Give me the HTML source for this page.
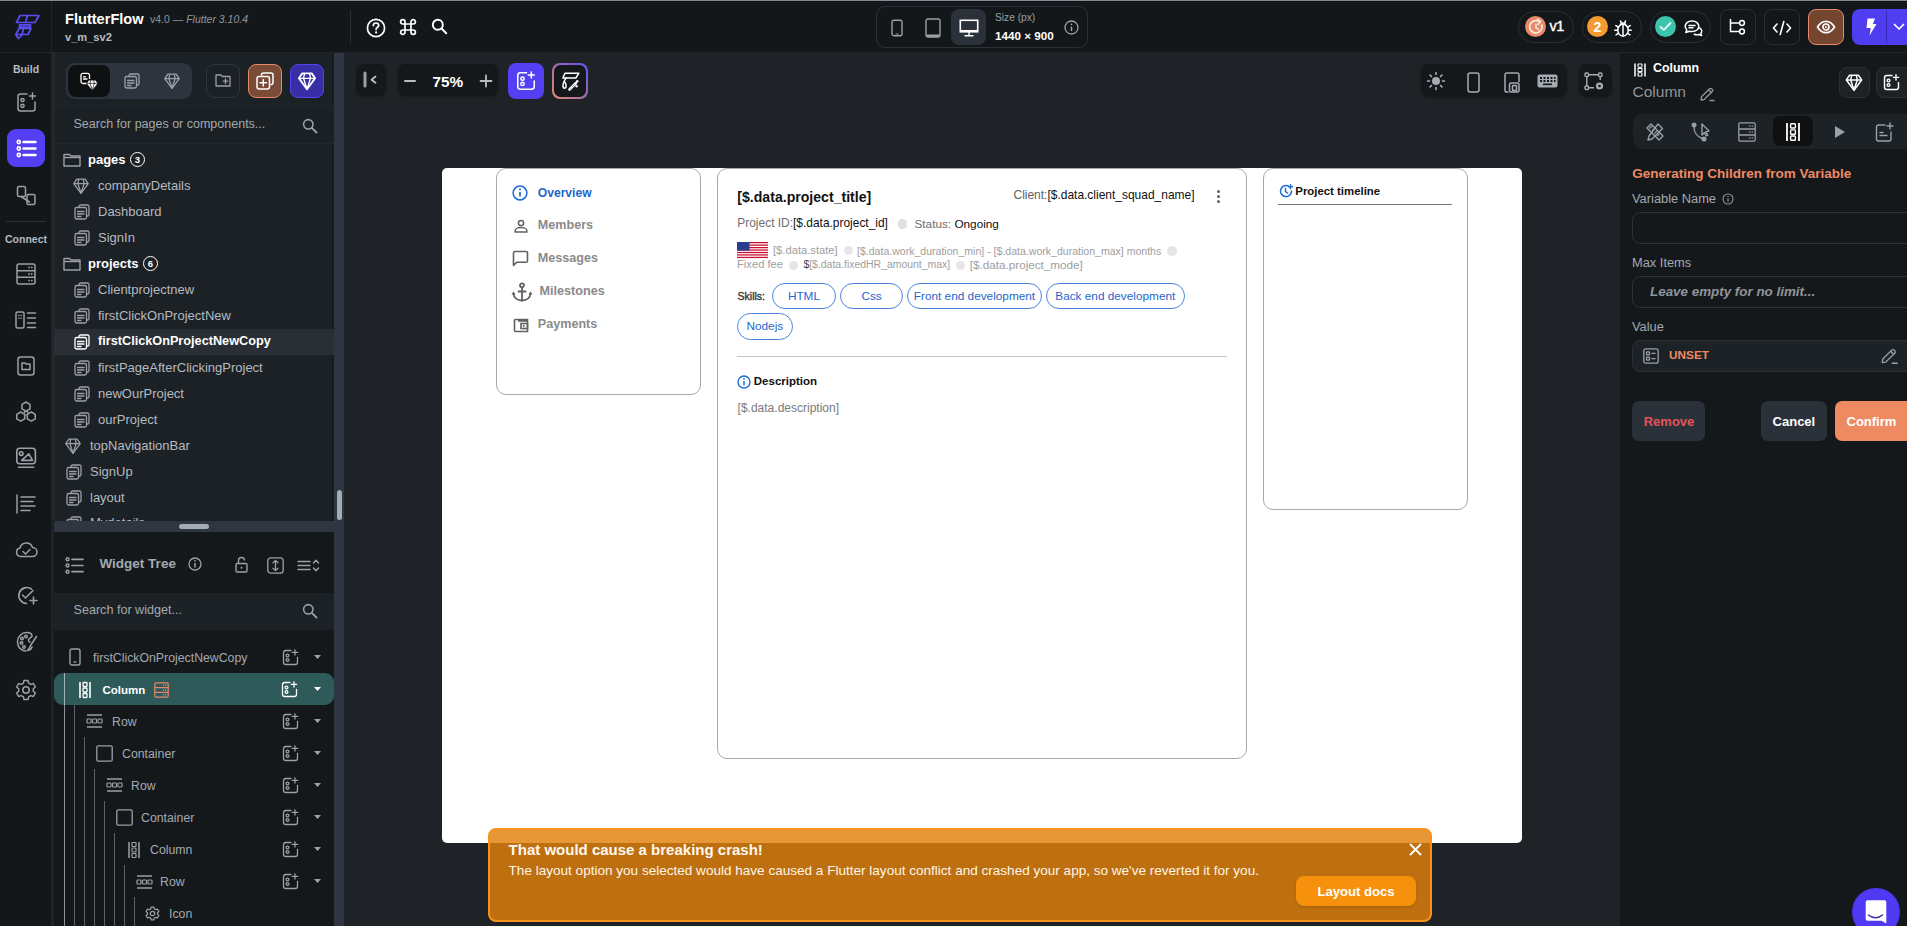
<!DOCTYPE html>
<html><head><meta charset="utf-8"><style>
*{margin:0;padding:0;box-sizing:border-box}
html,body{width:1907px;height:926px;overflow:hidden}
body{background:#1f2327;font-family:"Liberation Sans",sans-serif;position:relative;color:#fff}
.a{position:absolute}
.t{position:absolute;white-space:nowrap;line-height:1}
svg{position:absolute;overflow:visible}
.ic{fill:none;stroke:#9aa0a6;stroke-width:1.5;stroke-linecap:round;stroke-linejoin:round}
.w{stroke:#fff}
</style></head><body>

<!-- ============ PANEL BACKGROUNDS ============ -->
<div class="a" style="left:0;top:52px;width:52px;height:874px;background:#14171a"></div>
<div class="a" style="left:51px;top:52px;width:1px;height:874px;background:#202428"></div>
<div class="a" style="left:52px;top:52px;width:282px;height:874px;background:#1c2125"></div>
<div class="a" style="left:334px;top:52px;width:10px;height:874px;background:#2f3641"></div>
<div class="a" style="left:332px;top:52px;width:2px;height:874px;background:#181b1e"></div>
<div class="a" style="left:1620px;top:52px;width:287px;height:874px;background:#15181b"></div>

<!-- ============ TOP BAR ============ -->
<div class="a" style="left:0;top:0;width:1907px;height:52px;background:#14171a"></div>
<div class="a" style="left:0;top:0;width:1907px;height:1px;background:#858c93"></div>
<div class="a" style="left:0;top:1px;width:1907px;height:1px;background:#0c1117"></div>
<div class="a" style="left:0;top:2px;width:1907px;height:1px;background:#161b21"></div>
<div class="a" style="left:51px;top:1px;width:1px;height:51px;background:#202428"></div>
<div class="a" style="left:0;top:52px;width:1907px;height:1px;background:#202428"></div>

<!-- logo -->
<svg style="left:15px;top:13px" width="25" height="27" viewBox="0 0 25 27">
 <g fill="none" stroke="#5a4ef2" stroke-width="1.7" stroke-linejoin="round">
  <path d="M5 2.5 H24 L20 9.5 H1.5 Z"/>
  <path d="M12.5 2.5 L10.5 9.5"/>
  <path d="M4.5 11.8 H15.5 V14.2 H4.5 Z"/>
  <path d="M4 15.5 H16 L13 21.5 H0.8 Z"/>
  <path d="M8.5 15.5 L7 21.5"/>
  <path d="M0.8 21.5 L3.5 25.5 L7.5 21.5"/>
 </g>
</svg>
<div class="t" style="left:65px;top:12px;font-size:14.6px;font-weight:bold;color:#fff">FlutterFlow</div>
<div class="t" style="left:150px;top:14px;font-size:10.5px;color:#8f959b">v4.0 — <i>Flutter 3.10.4</i></div>
<div class="t" style="left:65px;top:32px;font-size:11.1px;font-weight:bold;color:#b7bcc1">v_m_sv2</div>

<div class="a" style="left:350px;top:10px;width:1px;height:34px;background:#2a2e33"></div>

<!-- help / cmd / search -->
<svg style="left:366px;top:18px" width="20" height="20" viewBox="0 0 20 20">
 <circle cx="10" cy="10" r="8.6" fill="none" stroke="#fff" stroke-width="1.7"/>
 <path d="M7.3 7.6 C7.3 5.9 8.6 5 10 5 C11.5 5 12.7 6 12.7 7.4 C12.7 9.2 10.1 9.4 10.1 11.4" fill="none" stroke="#fff" stroke-width="1.7" stroke-linecap="round"/>
 <circle cx="10.1" cy="14.4" r="1.1" fill="#fff"/>
</svg>
<svg style="left:400px;top:19px" width="16" height="16" viewBox="0 0 16 16">
 <path d="M5 5 H11 V11 H5 Z M5 5 V2.8 A2.2 2.2 0 1 0 2.8 5 H5 M11 5 V2.8 A2.2 2.2 0 1 1 13.2 5 H11 M5 11 V13.2 A2.2 2.2 0 1 1 2.8 11 H5 M11 11 V13.2 A2.2 2.2 0 1 0 13.2 11 H11" fill="none" stroke="#fff" stroke-width="1.7"/>
</svg>
<svg style="left:431px;top:18px" width="17" height="17" viewBox="0 0 17 17">
 <circle cx="6.8" cy="6.8" r="5" fill="none" stroke="#fff" stroke-width="1.9"/>
 <path d="M10.5 10.5 L15.2 15.2" stroke="#fff" stroke-width="2" stroke-linecap="round"/>
</svg>

<!-- device selector -->
<div class="a" style="left:876px;top:6px;width:212px;height:42px;border:1px solid #2b3035;border-radius:9px"></div>
<svg style="left:891px;top:19px" width="12" height="18" viewBox="0 0 12 18">
 <rect x="1" y="1.2" width="10" height="15.6" rx="2" fill="none" stroke="#9aa0a6" stroke-width="1.4"/>
 <path d="M4.5 15 H7.5" stroke="#9aa0a6" stroke-width="1"/>
</svg>
<svg style="left:925px;top:18px" width="16" height="20" viewBox="0 0 16 20">
 <rect x="1" y="1" width="14" height="18" rx="2" fill="none" stroke="#9aa0a6" stroke-width="1.4"/>
 <path d="M1.5 16.5 H14.5 V17 A2 2 0 0 1 12.5 19 H3.5 A2 2 0 0 1 1.5 17 Z" fill="#9aa0a6"/>
</svg>
<div class="a" style="left:951px;top:9px;width:35px;height:36px;background:#2b3138;border-radius:8px"></div>
<svg style="left:959px;top:19px" width="20" height="18" viewBox="0 0 20 18">
 <rect x="1.3" y="1.3" width="17.4" height="11.5" fill="none" stroke="#fff" stroke-width="1.6"/>
 <path d="M1.3 11.8 H18.7" stroke="#fff" stroke-width="1.6"/>
 <path d="M10 13 V16 M5.5 16.8 H14.5" stroke="#fff" stroke-width="1.4"/>
</svg>
<div class="t" style="left:995px;top:13.3px;font-size:10.2px;color:#9aa0a6">Size (px)</div>
<div class="t" style="left:995px;top:30px;font-size:11.7px;font-weight:bold;color:#fff">1440 × 900</div>
<svg style="left:1064px;top:20px" width="15" height="15" viewBox="0 0 15 15">
 <circle cx="7.5" cy="7.5" r="6.5" fill="none" stroke="#9aa0a6" stroke-width="1.3"/>
 <path d="M7.5 6.5 V11" stroke="#9aa0a6" stroke-width="1.5"/>
 <circle cx="7.5" cy="4.3" r="0.9" fill="#9aa0a6"/>
</svg>

<!-- right pills -->
<div class="a" style="left:1518px;top:11px;width:56px;height:32px;border:1px solid #2a2f35;border-radius:16px"></div>
<div class="a" style="left:1525px;top:16px;width:21px;height:21px;border-radius:50%;background:#e8896a"></div>
<svg style="left:1526px;top:17px" width="20" height="20" viewBox="0 0 20 20">
 <path d="M15.8 8.2 A6.2 6.2 0 1 1 12.8 4.4" fill="none" stroke="#fde6dc" stroke-width="1.8" stroke-linecap="round"/>
 <path d="M11.5 2.3 L14.6 4.4 L12.3 7.2" fill="none" stroke="#fde6dc" stroke-width="1.7" stroke-linecap="round" stroke-linejoin="round"/>
 <path d="M10 7.2 V10.6 L12.2 12.2" fill="none" stroke="#fde6dc" stroke-width="1.5" stroke-linecap="round"/>
</svg>
<div class="t" style="left:1549.5px;top:19.3px;font-size:14.5px;color:#fff;letter-spacing:-0.6px;-webkit-text-stroke:0.4px #fff">v1</div>

<div class="a" style="left:1582px;top:11px;width:60px;height:32px;border:1px solid #2a2f35;border-radius:16px"></div>
<div class="a" style="left:1587px;top:16px;width:21px;height:21px;border-radius:50%;background:#f39b32"></div>
<div class="t" style="left:1587px;top:19.5px;width:21px;text-align:center;font-size:14px;font-weight:bold;color:#fff">2</div>
<svg style="left:1614px;top:20px" width="18" height="17" viewBox="0 0 18 17">
 <g fill="none" stroke="#fff" stroke-width="1.5" stroke-linecap="round">
  <ellipse cx="9" cy="10.2" rx="5.2" ry="5.9"/>
  <path d="M6.3 4.8 A2.8 2.6 0 0 1 11.7 4.8"/>
  <path d="M9 5 V16"/>
  <path d="M0.8 10.2 H3.6 M14.4 10.2 H17.2 M1.8 5.6 L4.2 7 M16.2 5.6 L13.8 7 M2 14.8 L4.4 13.4 M16 14.8 L13.6 13.4 M6.5 1 L7.4 2.8 M11.5 1 L10.6 2.8"/>
 </g>
</svg>

<div class="a" style="left:1650px;top:11px;width:61px;height:32px;border:1px solid #2a2f35;border-radius:16px"></div>
<div class="a" style="left:1655px;top:16px;width:21px;height:21px;border-radius:50%;background:#3cc4ad"></div>
<svg style="left:1659px;top:21px" width="13" height="11" viewBox="0 0 13 11">
 <path d="M1.5 5.8 L4.8 8.8 L11.5 2" fill="none" stroke="#e5fbf6" stroke-width="1.8" stroke-linecap="round" stroke-linejoin="round"/>
</svg>
<svg style="left:1684px;top:19px" width="19" height="18" viewBox="0 0 19 18">
 <g fill="none" stroke="#fff" stroke-width="1.5" stroke-linecap="round" stroke-linejoin="round">
  <path d="M8 2 C3.8 2 1.2 4.4 1.2 7.3 C1.2 8.7 1.8 9.9 2.8 10.8 L1.8 13.5 L5.3 12.2 C6.1 12.5 7 12.6 8 12.6 C12.2 12.6 14.8 10.2 14.8 7.3 C14.8 4.4 12.2 2 8 2 Z"/>
  <path d="M5 6.5 H11 M5 8.8 H9"/>
  <path d="M15.6 8.8 C17 9.6 17.8 10.8 17.8 12.1 C17.8 13 17.4 13.8 16.8 14.4 L17.6 16.5 L14.8 15.5 C13.3 16 11.6 15.9 10.3 15.3"/>
 </g>
</svg>

<div class="a" style="left:1720px;top:9px;width:36px;height:36px;border:1px solid #2a2f35;border-radius:8px"></div>
<svg style="left:1729px;top:18px" width="18" height="18" viewBox="0 0 18 18">
 <g fill="none" stroke="#fff" stroke-width="1.5" stroke-linecap="round">
  <path d="M1.5 1.5 V13.5 H10"/>
  <path d="M1.5 5 H10"/>
  <circle cx="13" cy="5" r="2.4"/>
  <circle cx="13" cy="13.5" r="2.4"/>
 </g>
</svg>
<div class="a" style="left:1764px;top:9px;width:36px;height:36px;border:1px solid #2a2f35;border-radius:8px"></div>
<svg style="left:1772px;top:20px" width="20" height="16" viewBox="0 0 20 16">
 <g fill="none" stroke="#fff" stroke-width="1.6" stroke-linecap="round" stroke-linejoin="round">
  <path d="M5 4 L1.5 8 L5 12 M15 4 L18.5 8 L15 12 M11.8 1.5 L8.2 14.5"/>
 </g>
</svg>
<div class="a" style="left:1808px;top:9px;width:36px;height:36px;background:#74452f;border:1.5px solid #e8896a;border-radius:8px"></div>
<svg style="left:1816px;top:20px" width="20" height="14" viewBox="0 0 20 14">
 <path d="M1.5 7 C4 2.8 7 1.3 10 1.3 C13 1.3 16 2.8 18.5 7 C16 11.2 13 12.7 10 12.7 C7 12.7 4 11.2 1.5 7 Z" fill="none" stroke="#fff" stroke-width="1.7"/>
 <circle cx="10" cy="7" r="3" fill="none" stroke="#fff" stroke-width="1.7"/>
 <circle cx="10" cy="7" r="1" fill="#fff"/>
</svg>
<div class="a" style="left:1852px;top:9px;width:70px;height:36px;background:#4f3df0;border-radius:8px"></div>
<div class="a" style="left:1886px;top:11px;width:1px;height:32px;background:#3525b8"></div>
<svg style="left:1865px;top:18px" width="13" height="18" viewBox="0 0 13 18">
 <path d="M2.5 0.5 H10 L7.8 6 H11.5 L4.5 17.5 L5.8 10 H1.5 Z" fill="#fff"/>
</svg>
<svg style="left:1893px;top:23px" width="12" height="8" viewBox="0 0 12 8">
 <path d="M1.5 1.5 L6 6 L10.5 1.5" fill="none" stroke="#fff" stroke-width="1.7" stroke-linecap="round" stroke-linejoin="round"/>
</svg>


<!-- ============ LEFT RAIL ============ -->
<div class="t" style="left:0;top:64px;width:52px;text-align:center;font-size:10.5px;font-weight:bold;color:#b5bac0">Build</div>
<svg style="left:16px;top:92px" width="21" height="21" viewBox="0 0 21 21">
 <g fill="none" stroke="#9aa0a6" stroke-width="1.5" stroke-linecap="round">
  <path d="M11 2 H4.5 A2.5 2.5 0 0 0 2 4.5 V16.5 A2.5 2.5 0 0 0 4.5 19 H16.5 A2.5 2.5 0 0 0 19 16.5 V10"/>
  <path d="M16.5 1 V7 M13.5 4 H19.5"/>
  <circle cx="6.5" cy="8" r="1.6"/><circle cx="6.5" cy="13.8" r="1.6"/>
 </g>
</svg>
<div class="a" style="left:7px;top:129px;width:38px;height:38px;background:#5440f2;border-radius:9px"></div>
<svg style="left:16px;top:139px" width="21" height="19" viewBox="0 0 21 19">
 <g fill="none" stroke="#fff" stroke-width="1.6" stroke-linecap="round">
  <circle cx="2.8" cy="3" r="1.6"/><circle cx="2.8" cy="9.5" r="1.6"/><circle cx="2.8" cy="16" r="1.6"/>
 </g>
 <path d="M7.5 3 H19.5 M7.5 9.5 H19.5 M7.5 16 H19.5" stroke="#fff" stroke-width="2.4" stroke-linecap="round"/>
</svg>
<svg style="left:16px;top:185px" width="21" height="21" viewBox="0 0 21 21">
 <g fill="none" stroke="#9aa0a6" stroke-width="1.5" stroke-linejoin="round">
  <rect x="1.5" y="1.5" width="8" height="10" rx="1.5"/>
  <rect x="11" y="9.5" width="8" height="10" rx="1.5"/>
  <path d="M5 11.5 L13.5 17" stroke-linecap="round"/>
 </g>
</svg>
<div class="a" style="left:6px;top:221px;width:40px;height:1px;background:#2b3035"></div>
<div class="t" style="left:0;top:234px;width:52px;text-align:center;font-size:10.5px;font-weight:bold;color:#b5bac0">Connect</div>
<svg style="left:16px;top:263px" width="20" height="22" viewBox="0 0 20 22">
 <g fill="none" stroke="#9aa0a6" stroke-width="1.5" stroke-linejoin="round">
  <rect x="1" y="1" width="18" height="20" rx="2"/>
  <path d="M1 7.7 H19 M1 14.3 H19"/>
 </g>
 <g fill="#9aa0a6"><circle cx="13" cy="4.4" r="0.9"/><circle cx="15.8" cy="4.4" r="0.9"/><circle cx="13" cy="11" r="0.9"/><circle cx="15.8" cy="11" r="0.9"/><circle cx="13" cy="17.6" r="0.9"/><circle cx="15.8" cy="17.6" r="0.9"/></g>
</svg>
<svg style="left:15px;top:311px" width="22" height="18" viewBox="0 0 22 18">
 <g fill="none" stroke="#9aa0a6" stroke-width="1.5" stroke-linecap="round" stroke-linejoin="round">
  <rect x="1" y="1" width="8" height="16" rx="1.5"/>
  <path d="M12.5 2 H20.5 M12.5 7 H20.5 M12.5 12 H20.5 M12.5 16.5 H20.5"/>
 </g>
 <g fill="#9aa0a6"><circle cx="4" cy="4.5" r="0.8"/><circle cx="6.2" cy="4.5" r="0.8"/><circle cx="4" cy="7.3" r="0.8"/><circle cx="6.2" cy="7.3" r="0.8"/></g>
</svg>
<svg style="left:17px;top:356px" width="18" height="20" viewBox="0 0 18 20">
 <g fill="none" stroke="#9aa0a6" stroke-width="1.5" stroke-linejoin="round">
  <rect x="1" y="1" width="16" height="18" rx="2.5"/>
  <path d="M5 7 H8 L9 8 H13 V13.5 H5 Z"/>
 </g>
</svg>
<svg style="left:15px;top:401px" width="22" height="22" viewBox="0 0 22 22">
 <g fill="none" stroke="#9aa0a6" stroke-width="1.5" stroke-linejoin="round">
  <path d="M11.00 1.00 L14.98 3.30 L14.98 7.90 L11.00 10.20 L7.02 7.90 L7.02 3.30 Z"/>
  <path d="M5.70 11.00 L9.68 13.30 L9.68 17.90 L5.70 20.20 L1.72 17.90 L1.72 13.30 Z"/>
  <path d="M16.30 11.00 L20.28 13.30 L20.28 17.90 L16.30 20.20 L12.32 17.90 L12.32 13.30 Z"/>
 </g>
 <circle cx="11" cy="12.2" r="2.5" fill="#14171a"/>
 <circle cx="11" cy="12.2" r="1.9" fill="none" stroke="#9aa0a6" stroke-width="1.4"/>
</svg>
<svg style="left:16px;top:447px" width="20" height="22" viewBox="0 0 20 22">
 <g fill="none" stroke="#9aa0a6" stroke-width="1.6" stroke-linecap="round" stroke-linejoin="round">
  <rect x="0.8" y="1.3" width="18.6" height="15.5" rx="3"/>
  <path d="M5.6 13.4 L12.8 6.8 L16.5 13.4 Z"/>
  <circle cx="5.2" cy="6.6" r="1.8"/>
  <path d="M2.5 20.3 H17.8"/>
 </g>
</svg>
<svg style="left:16px;top:494px" width="20" height="20" viewBox="0 0 20 20">
 <g fill="none" stroke="#9aa0a6" stroke-width="1.5" stroke-linecap="round">
  <path d="M1 1 V19"/>
  <path d="M5 3 H19 M5 7.5 H17 M5 12 H19 M5 16.5 H14"/>
 </g>
</svg>
<svg style="left:15px;top:542px" width="23" height="16" viewBox="0 0 23 16">
 <g fill="none" stroke="#9aa0a6" stroke-width="1.5" stroke-linecap="round" stroke-linejoin="round">
  <path d="M5.5 14.5 A4.3 4.3 0 0 1 5 6 A6.5 6.5 0 0 1 17.5 5.5 A4.5 4.5 0 0 1 17.5 14.5 Z"/>
  <path d="M8 9.5 L10.5 12 L15 7.5"/>
 </g>
</svg>
<svg style="left:17px;top:586px" width="21" height="19" viewBox="0 0 21 19">
 <g fill="none" stroke="#9aa0a6" stroke-width="1.6" stroke-linecap="round" stroke-linejoin="round">
  <path d="M14.5 3 A8 8 0 1 0 9.5 17.5"/>
  <path d="M5.5 9 L8.5 12 L16 4.5"/>
  <path d="M16.5 11 V18 M13 14.5 H20"/>
 </g>
</svg>
<svg style="left:16px;top:631px" width="22" height="22" viewBox="0 0 22 22">
 <g fill="none" stroke="#9aa0a6" stroke-width="1.5" stroke-linecap="round" stroke-linejoin="round">
  <path d="M10 20 C4.8 20 1.5 15.8 1.5 11 C1.5 5.5 5.5 1.5 10.5 1.5 C14 1.5 16 3.2 16 5 C16 6.8 12.5 7 12.5 9 C12.5 10 13 10.8 14 11.2"/>
  <circle cx="6" cy="7.5" r="1.3"/><circle cx="10" cy="5.5" r="1.3"/><circle cx="5.5" cy="12" r="1.3"/><circle cx="8" cy="16" r="1.3"/>
  <path d="M20.5 5.5 L14.5 14.5 M14.5 14.5 L13 17.5 L11.5 19.5 L14.5 18.5 L16 16"/>
 </g>
</svg>
<svg style="left:15px;top:679px" width="22" height="22" viewBox="0 0 22 22">
 <g fill="none" stroke="#9aa0a6" stroke-width="1.5" stroke-linejoin="round">
  <path d="M9 1.5 H13 L13.6 4.2 L15.8 5.4 L18.4 4.5 L20.4 8 L18.3 9.8 V12.2 L20.4 14 L18.4 17.5 L15.8 16.6 L13.6 17.8 L13 20.5 H9 L8.4 17.8 L6.2 16.6 L3.6 17.5 L1.6 14 L3.7 12.2 V9.8 L1.6 8 L3.6 4.5 L6.2 5.4 L8.4 4.2 Z"/>
  <circle cx="11" cy="11" r="3.2"/>
 </g>
</svg>


<!-- ============ LEFT PANEL ============ -->
<div class="a" style="left:52px;top:52px;width:3px;height:468px;background:#22272c"></div>
<div class="a" style="left:66px;top:63px;width:126px;height:36px;background:#2e343d;border-radius:9px"></div>
<div class="a" style="left:68px;top:64.5px;width:42px;height:32px;background:#0e1012;border-radius:8px"></div>
<svg style="left:80px;top:72px" width="18" height="19" viewBox="0 0 18 19">
 <g fill="none" stroke="#fff" stroke-width="1.3" stroke-linejoin="round"><path d="M6.5 11.5 H3 A2 2 0 0 1 1 9.5 V3.3 A2 2 0 0 1 3 1.3 H7.5 A2 2 0 0 1 9.5 3.3 V7"/><path d="M3.5 4.8 H5.5 M3.5 7 H7" stroke-linecap="round"/></g>
 <path d="M8.8 8.4 H15.6 L17.5 11.4 L12.2 18.2 L6.9 11.4 Z" fill="#fff"/>
 <path d="M6.9 11.4 H17.5 M10.6 8.4 L10 11.4 L12.2 18 L14.4 11.4 L13.8 8.4" fill="none" stroke="#0e1012" stroke-width="0.7"/>
</svg>
<svg style="left:124px;top:73px" width="16" height="16" viewBox="0 0 16 16"><g fill="none" stroke="#9aa0a6" stroke-width="1.3" stroke-linejoin="round"><path d="M5 3.2 V2.6 A1.6 1.6 0 0 1 6.6 1 H13.4 A1.6 1.6 0 0 1 15 2.6 V10.4 A1.6 1.6 0 0 1 13.4 12 H12.6"/><rect x="1" y="3.5" width="11.5" height="11.5" rx="1.8"/><path d="M3.5 7.5 H10 M3.5 10 H10 M3.5 12.5 H7" stroke-linecap="round"/></g></svg><svg style="left:164px;top:73px" width="16" height="16" viewBox="0 0 16 16"><g fill="none" stroke="#9aa0a6" stroke-width="1.3" stroke-linejoin="round"><path d="M3.8 1.2 H12.2 L15.2 5.6 L8 15.3 L0.8 5.6 Z"/><path d="M0.8 5.6 H15.2 M5.8 1.2 L4.9 5.6 L8 15.3 L11.1 5.6 L10.2 1.2"/></g></svg>
<div class="a" style="left:206px;top:64px;width:34px;height:34px;border:1.3px solid #30363d;border-radius:8px"></div>
<svg style="left:215px;top:74px" width="16" height="13" viewBox="0 0 16 13"><g fill="none" stroke="#9aa0a6" stroke-width="1.3" stroke-linejoin="round"><path d="M1 1 H6 L7.5 2.5 H15 V12 H1 Z"/><path d="M10.5 5 V9.5 M8.3 7.2 H12.7" stroke-linecap="round"/></g></svg>
<div class="a" style="left:248px;top:64px;width:34px;height:34px;background:#7a4b36;border:1.5px solid #e8896a;border-radius:8px"></div>
<svg style="left:256px;top:72px" width="18" height="18" viewBox="0 0 18 18"><g fill="none" stroke="#fff" stroke-width="1.5" stroke-linejoin="round"><path d="M5.5 3.5 V3 A2 2 0 0 1 7.5 1 H15 A2 2 0 0 1 17 3 V10.5 A2 2 0 0 1 15 12.5 H14.5"/><rect x="1" y="4.5" width="12.5" height="12.5" rx="2.2"/><path d="M7.25 7.5 V14 M4 10.75 H10.5" stroke-linecap="round"/></g></svg>
<div class="a" style="left:290px;top:64px;width:34px;height:34px;background:#382fa6;border:1.5px solid #5443f0;border-radius:8px"></div>
<svg style="left:298px;top:72px" width="18" height="18" viewBox="0 0 16 16"><g fill="none" stroke="#fff" stroke-width="1.7" stroke-linejoin="round"><path d="M3.8 1.2 H12.2 L15.2 5.6 L8 15.3 L0.8 5.6 Z"/><path d="M0.8 5.6 H15.2 M5.8 1.2 L4.9 5.6 L8 15.3 L11.1 5.6 L10.2 1.2" stroke-width="1.2"/></g></svg>

<div class="a" style="left:55px;top:105px;width:279px;height:1px;background:#22272b"></div>
<div class="a" style="left:55px;top:106px;width:279px;height:37px;background:#1b2024"></div>
<div class="a" style="left:55px;top:143px;width:279px;height:1px;background:#22272b"></div>
<div class="t" style="left:73.5px;top:118px;font-size:12.5px;color:#a3a9af">Search for pages or components...</div>
<svg style="left:302px;top:118px" width="16" height="16" viewBox="0 0 16 16"><circle cx="6.3" cy="6.3" r="4.7" fill="none" stroke="#9aa0a6" stroke-width="1.6"/><path d="M9.8 9.8 L14.5 14.5" stroke="#9aa0a6" stroke-width="1.8" stroke-linecap="round"/></svg>
<svg style="left:63px;top:153px" width="18" height="14" viewBox="0 0 18 14"><g fill="none" stroke="#9aa0a6" stroke-width="1.4" stroke-linejoin="round"><path d="M1 1.5 H6.5 L8 3 H17 V13 H1 Z"/><path d="M1 4.5 H17"/></g></svg>
<div class="t" style="left:88px;top:153px;font-size:13px;font-weight:bold;color:#fff">pages</div>
<div class="a" style="left:130px;top:151.5px;width:15px;height:15px;border:1.3px solid #fff;border-radius:50%"></div>
<div class="t" style="left:130px;top:154.5px;width:15px;text-align:center;font-size:9.5px;font-weight:bold;color:#fff">3</div>
<svg style="left:73px;top:178px" width="16" height="16" viewBox="0 0 16 16"><g fill="none" stroke="#9aa0a6" stroke-width="1.3" stroke-linejoin="round"><path d="M3.8 1.2 H12.2 L15.2 5.6 L8 15.3 L0.8 5.6 Z"/><path d="M0.8 5.6 H15.2 M5.8 1.2 L4.9 5.6 L8 15.3 L11.1 5.6 L10.2 1.2"/></g></svg>
<div class="t" style="left:98px;top:179px;font-size:13px;color:#b5bac0">companyDetails</div>
<svg style="left:74px;top:204px" width="16" height="16" viewBox="0 0 16 16"><g fill="none" stroke="#9aa0a6" stroke-width="1.3" stroke-linejoin="round"><path d="M5 3.2 V2.6 A1.6 1.6 0 0 1 6.6 1 H13.4 A1.6 1.6 0 0 1 15 2.6 V10.4 A1.6 1.6 0 0 1 13.4 12 H12.6"/><rect x="1" y="3.5" width="11.5" height="11.5" rx="1.8"/><path d="M3.5 7.5 H10 M3.5 10 H10 M3.5 12.5 H7" stroke-linecap="round"/></g></svg>
<div class="t" style="left:98px;top:205px;font-size:13px;color:#b5bac0">Dashboard</div>
<svg style="left:74px;top:230px" width="16" height="16" viewBox="0 0 16 16"><g fill="none" stroke="#9aa0a6" stroke-width="1.3" stroke-linejoin="round"><path d="M5 3.2 V2.6 A1.6 1.6 0 0 1 6.6 1 H13.4 A1.6 1.6 0 0 1 15 2.6 V10.4 A1.6 1.6 0 0 1 13.4 12 H12.6"/><rect x="1" y="3.5" width="11.5" height="11.5" rx="1.8"/><path d="M3.5 7.5 H10 M3.5 10 H10 M3.5 12.5 H7" stroke-linecap="round"/></g></svg>
<div class="t" style="left:98px;top:231px;font-size:13px;color:#b5bac0">SignIn</div>
<svg style="left:63px;top:257px" width="18" height="14" viewBox="0 0 18 14"><g fill="none" stroke="#9aa0a6" stroke-width="1.4" stroke-linejoin="round"><path d="M1 1.5 H6.5 L8 3 H17 V13 H1 Z"/><path d="M1 4.5 H17"/></g></svg>
<div class="t" style="left:88px;top:257px;font-size:13px;font-weight:bold;color:#fff">projects</div>
<div class="a" style="left:143px;top:255.5px;width:15px;height:15px;border:1.3px solid #fff;border-radius:50%"></div>
<div class="t" style="left:143px;top:258.5px;width:15px;text-align:center;font-size:9.5px;font-weight:bold;color:#fff">6</div>
<svg style="left:74px;top:282px" width="16" height="16" viewBox="0 0 16 16"><g fill="none" stroke="#9aa0a6" stroke-width="1.3" stroke-linejoin="round"><path d="M5 3.2 V2.6 A1.6 1.6 0 0 1 6.6 1 H13.4 A1.6 1.6 0 0 1 15 2.6 V10.4 A1.6 1.6 0 0 1 13.4 12 H12.6"/><rect x="1" y="3.5" width="11.5" height="11.5" rx="1.8"/><path d="M3.5 7.5 H10 M3.5 10 H10 M3.5 12.5 H7" stroke-linecap="round"/></g></svg>
<div class="t" style="left:98px;top:283px;font-size:13px;color:#b5bac0">Clientprojectnew</div>
<svg style="left:74px;top:308px" width="16" height="16" viewBox="0 0 16 16"><g fill="none" stroke="#9aa0a6" stroke-width="1.3" stroke-linejoin="round"><path d="M5 3.2 V2.6 A1.6 1.6 0 0 1 6.6 1 H13.4 A1.6 1.6 0 0 1 15 2.6 V10.4 A1.6 1.6 0 0 1 13.4 12 H12.6"/><rect x="1" y="3.5" width="11.5" height="11.5" rx="1.8"/><path d="M3.5 7.5 H10 M3.5 10 H10 M3.5 12.5 H7" stroke-linecap="round"/></g></svg>
<div class="t" style="left:98px;top:309px;font-size:13px;color:#b5bac0">firstClickOnProjectNew</div>
<div class="a" style="left:54px;top:328.5px;width:280px;height:26px;background:#2a2f35"></div>
<svg style="left:74px;top:334px" width="16" height="16" viewBox="0 0 16 16"><g fill="none" stroke="#fff" stroke-width="1.3" stroke-linejoin="round"><path d="M5 3.2 V2.6 A1.6 1.6 0 0 1 6.6 1 H13.4 A1.6 1.6 0 0 1 15 2.6 V10.4 A1.6 1.6 0 0 1 13.4 12 H12.6"/><rect x="1" y="3.5" width="11.5" height="11.5" rx="1.8"/><path d="M3.5 7.5 H10 M3.5 10 H10 M3.5 12.5 H7" stroke-linecap="round"/></g></svg>
<div class="t" style="left:98px;top:335px;font-size:12.7px;font-weight:bold;color:#fff">firstClickOnProjectNewCopy</div>
<svg style="left:74px;top:360px" width="16" height="16" viewBox="0 0 16 16"><g fill="none" stroke="#9aa0a6" stroke-width="1.3" stroke-linejoin="round"><path d="M5 3.2 V2.6 A1.6 1.6 0 0 1 6.6 1 H13.4 A1.6 1.6 0 0 1 15 2.6 V10.4 A1.6 1.6 0 0 1 13.4 12 H12.6"/><rect x="1" y="3.5" width="11.5" height="11.5" rx="1.8"/><path d="M3.5 7.5 H10 M3.5 10 H10 M3.5 12.5 H7" stroke-linecap="round"/></g></svg>
<div class="t" style="left:98px;top:361px;font-size:13px;color:#b5bac0">firstPageAfterClickingProject</div>
<svg style="left:74px;top:386px" width="16" height="16" viewBox="0 0 16 16"><g fill="none" stroke="#9aa0a6" stroke-width="1.3" stroke-linejoin="round"><path d="M5 3.2 V2.6 A1.6 1.6 0 0 1 6.6 1 H13.4 A1.6 1.6 0 0 1 15 2.6 V10.4 A1.6 1.6 0 0 1 13.4 12 H12.6"/><rect x="1" y="3.5" width="11.5" height="11.5" rx="1.8"/><path d="M3.5 7.5 H10 M3.5 10 H10 M3.5 12.5 H7" stroke-linecap="round"/></g></svg>
<div class="t" style="left:98px;top:387px;font-size:13px;color:#b5bac0">newOurProject</div>
<svg style="left:74px;top:412px" width="16" height="16" viewBox="0 0 16 16"><g fill="none" stroke="#9aa0a6" stroke-width="1.3" stroke-linejoin="round"><path d="M5 3.2 V2.6 A1.6 1.6 0 0 1 6.6 1 H13.4 A1.6 1.6 0 0 1 15 2.6 V10.4 A1.6 1.6 0 0 1 13.4 12 H12.6"/><rect x="1" y="3.5" width="11.5" height="11.5" rx="1.8"/><path d="M3.5 7.5 H10 M3.5 10 H10 M3.5 12.5 H7" stroke-linecap="round"/></g></svg>
<div class="t" style="left:98px;top:413px;font-size:13px;color:#b5bac0">ourProject</div>
<svg style="left:65px;top:438px" width="16" height="16" viewBox="0 0 16 16"><g fill="none" stroke="#9aa0a6" stroke-width="1.3" stroke-linejoin="round"><path d="M3.8 1.2 H12.2 L15.2 5.6 L8 15.3 L0.8 5.6 Z"/><path d="M0.8 5.6 H15.2 M5.8 1.2 L4.9 5.6 L8 15.3 L11.1 5.6 L10.2 1.2"/></g></svg>
<div class="t" style="left:90px;top:439px;font-size:13px;color:#b5bac0">topNavigationBar</div>
<svg style="left:66px;top:464px" width="16" height="16" viewBox="0 0 16 16"><g fill="none" stroke="#9aa0a6" stroke-width="1.3" stroke-linejoin="round"><path d="M5 3.2 V2.6 A1.6 1.6 0 0 1 6.6 1 H13.4 A1.6 1.6 0 0 1 15 2.6 V10.4 A1.6 1.6 0 0 1 13.4 12 H12.6"/><rect x="1" y="3.5" width="11.5" height="11.5" rx="1.8"/><path d="M3.5 7.5 H10 M3.5 10 H10 M3.5 12.5 H7" stroke-linecap="round"/></g></svg>
<div class="t" style="left:90px;top:465px;font-size:13px;color:#b5bac0">SignUp</div>
<svg style="left:66px;top:490px" width="16" height="16" viewBox="0 0 16 16"><g fill="none" stroke="#9aa0a6" stroke-width="1.3" stroke-linejoin="round"><path d="M5 3.2 V2.6 A1.6 1.6 0 0 1 6.6 1 H13.4 A1.6 1.6 0 0 1 15 2.6 V10.4 A1.6 1.6 0 0 1 13.4 12 H12.6"/><rect x="1" y="3.5" width="11.5" height="11.5" rx="1.8"/><path d="M3.5 7.5 H10 M3.5 10 H10 M3.5 12.5 H7" stroke-linecap="round"/></g></svg>
<div class="t" style="left:90px;top:491px;font-size:13px;color:#b5bac0">layout</div>
<div class="a" style="left:55px;top:512px;width:279px;height:9px;overflow:hidden">
<svg style="left:11px;top:4px" width="16" height="16" viewBox="0 0 16 16"><g fill="none" stroke="#9aa0a6" stroke-width="1.3" stroke-linejoin="round"><path d="M5 3.2 V2.6 A1.6 1.6 0 0 1 6.6 1 H13.4 A1.6 1.6 0 0 1 15 2.6 V10.4 A1.6 1.6 0 0 1 13.4 12 H12.6"/><rect x="1" y="3.5" width="11.5" height="11.5" rx="1.8"/><path d="M3.5 7.5 H10 M3.5 10 H10 M3.5 12.5 H7" stroke-linecap="round"/></g></svg>
<div class="t" style="left:35px;top:4px;font-size:13px;color:#b5bac0">Mydetails</div>
</div>
<div class="a" style="left:54px;top:520.5px;width:280px;height:11.5px;background:#2f3640"></div>
<div class="a" style="left:179px;top:523.5px;width:30px;height:5px;background:#a3abb5;border-radius:3px"></div>
<div class="a" style="left:336.5px;top:490px;width:5.3px;height:30px;background:#a3abb5;border-radius:3px"></div>


<!-- ============ WIDGET TREE ============ -->
<div class="a" style="left:54px;top:532px;width:280px;height:61px;background:#15181b"></div>
<svg style="left:65px;top:557px" width="19" height="17" viewBox="0 0 19 17"><g fill="none" stroke="#9aa0a6" stroke-width="1.4" stroke-linecap="round"><circle cx="2.5" cy="2.3" r="1.5"/><circle cx="2.5" cy="8.5" r="1.5"/><circle cx="2.5" cy="14.7" r="1.5"/><path d="M7 2.3 H18 M7 8.5 H18 M7 14.7 H18" stroke-width="1.7"/></g></svg>
<div class="t" style="left:99.5px;top:557px;font-size:13.5px;font-weight:bold;color:#a3a9af">Widget Tree</div>
<svg style="left:188px;top:557px" width="14" height="14" viewBox="0 0 14 14"><circle cx="7" cy="7" r="6" fill="none" stroke="#9aa0a6" stroke-width="1.3"/><path d="M7 6 V10.5" stroke="#9aa0a6" stroke-width="1.5"/><circle cx="7" cy="3.8" r="0.9" fill="#9aa0a6"/></svg>
<svg style="left:235px;top:556px" width="13" height="17" viewBox="0 0 13 17"><g fill="none" stroke="#9aa0a6" stroke-width="1.4"><rect x="1" y="7.5" width="11" height="8.5" rx="1.2"/><path d="M3.5 7.5 V4.5 A3 3 0 0 1 9.5 4.5"/></g><circle cx="6.5" cy="11.7" r="1" fill="#9aa0a6"/></svg>
<svg style="left:267px;top:557px" width="17" height="17" viewBox="0 0 17 17"><g fill="none" stroke="#9aa0a6" stroke-width="1.3" stroke-linecap="round" stroke-linejoin="round"><rect x="0.8" y="0.8" width="15.4" height="15.4" rx="3"/><path d="M8.5 3.5 V13.5 M6 5.8 L8.5 3.5 L11 5.8 M6 11.2 L8.5 13.5 L11 11.2"/></g></svg>
<svg style="left:297px;top:558px" width="22" height="15" viewBox="0 0 22 15"><g fill="none" stroke="#9aa0a6" stroke-width="1.5" stroke-linecap="round" stroke-linejoin="round"><path d="M1 3.5 H13 M1 7.5 H13 M1 11.5 H13"/><path d="M16.5 5 L19 2.3 L21.5 5 M16.5 10 L19 12.7 L21.5 10"/></g></svg>

<div class="a" style="left:54px;top:593px;width:280px;height:37px;background:#1c2125"></div>
<div class="t" style="left:73.5px;top:604px;font-size:12.6px;color:#a3a9af">Search for widget...</div>
<svg style="left:302px;top:603px" width="16" height="16" viewBox="0 0 16 16"><circle cx="6.3" cy="6.3" r="4.7" fill="none" stroke="#9aa0a6" stroke-width="1.6"/><path d="M9.8 9.8 L14.5 14.5" stroke="#9aa0a6" stroke-width="1.8" stroke-linecap="round"/></svg>
<div class="a" style="left:54px;top:630px;width:280px;height:296px;background:#15181b"></div>

<!-- tree lines -->
<div class="a" style="left:64px;top:673px;width:1px;height:253px;background:#8d9399"></div>
<div class="a" style="left:74px;top:705px;width:1px;height:221px;background:#5c6167"></div>
<div class="a" style="left:84px;top:737px;width:1px;height:189px;background:#5c6167"></div>
<div class="a" style="left:94px;top:769px;width:1px;height:157px;background:#5c6167"></div>
<div class="a" style="left:104px;top:801px;width:1px;height:125px;background:#5c6167"></div>
<div class="a" style="left:114px;top:833px;width:1px;height:93px;background:#5c6167"></div>
<div class="a" style="left:124px;top:865px;width:1px;height:61px;background:#5c6167"></div>
<div class="a" style="left:134px;top:897px;width:1px;height:29px;background:#5c6167"></div>

<svg style="left:69px;top:648px" width="12" height="18" viewBox="0 0 12 18"><g fill="none" stroke="#9aa0a6" stroke-width="1.4"><rect x="1" y="1" width="10" height="16" rx="2"/></g><path d="M4.5 14 H7.5" stroke="#9aa0a6" stroke-width="1.3"/></svg>
<div class="t" style="left:93px;top:652px;font-size:12.3px;color:#a3a9af">firstClickOnProjectNewCopy</div>
<svg style="left:282px;top:649px" width="17" height="17" viewBox="0 0 17 17"><g fill="none" stroke="#9aa0a6" stroke-width="1.3" stroke-linecap="round"><path d="M9 1.5 H3.8 A2.3 2.3 0 0 0 1.5 3.8 V13.2 A2.3 2.3 0 0 0 3.8 15.5 H13.2 A2.3 2.3 0 0 0 15.5 13.2 V8.5"/><path d="M13 0.8 V6 M10.4 3.4 H15.6"/><circle cx="5.5" cy="6.5" r="1.4"/><circle cx="5.5" cy="11" r="1.4"/></g></svg><svg style="left:314px;top:655px" width="7" height="4" viewBox="0 0 7 4"><path d="M0 0 H7 L3.5 4 Z" fill="#9aa0a6"/></svg>
<div class="a" style="left:54px;top:673px;width:280px;height:32px;background:#2e5a5a;border-radius:9px"></div>
<svg style="left:79px;top:681px" width="12" height="18" viewBox="0 0 12 18"><g fill="none" stroke="#fff" stroke-width="1.3"><path d="M1 1 V17 M11 1 V17" stroke-width="1.6"/><rect x="4" y="1.5" width="4" height="4" rx="0.8"/><rect x="4" y="7" width="4" height="4" rx="0.8"/><rect x="4" y="12.5" width="4" height="4" rx="0.8"/></g></svg>
<div class="a" style="left:64px;top:673px;width:1px;height:32px;background:#9fb4b4"></div>
<div class="t" style="left:102.5px;top:684.8px;font-size:11.5px;font-weight:bold;color:#fff">Column</div>
<svg style="left:154px;top:682px" width="15" height="16" viewBox="0 0 15 16"><g fill="none" stroke="#e8896a" stroke-width="1.2"><rect x="0.8" y="0.8" width="13.4" height="14.4" rx="1.5"/><path d="M0.8 5.6 H14.2 M0.8 10.4 H14.2"/></g><g fill="#e8896a"><circle cx="9.5" cy="3.2" r="0.7"/><circle cx="11.7" cy="3.2" r="0.7"/><circle cx="9.5" cy="8" r="0.7"/><circle cx="11.7" cy="8" r="0.7"/><circle cx="9.5" cy="12.8" r="0.7"/><circle cx="11.7" cy="12.8" r="0.7"/></g></svg>
<svg style="left:281px;top:681px" width="17" height="17" viewBox="0 0 17 17"><g fill="none" stroke="#fff" stroke-width="1.3" stroke-linecap="round"><path d="M9 1.5 H3.8 A2.3 2.3 0 0 0 1.5 3.8 V13.2 A2.3 2.3 0 0 0 3.8 15.5 H13.2 A2.3 2.3 0 0 0 15.5 13.2 V8.5"/><path d="M13 0.8 V6 M10.4 3.4 H15.6"/><circle cx="5.5" cy="6.5" r="1.4"/><circle cx="5.5" cy="11" r="1.4"/></g></svg><svg style="left:314px;top:687px" width="7" height="4" viewBox="0 0 7 4"><path d="M0 0 H7 L3.5 4 Z" fill="#fff"/></svg><svg style="left:86px;top:714px" width="17" height="14" viewBox="0 0 17 14"><g fill="none" stroke="#9aa0a6" stroke-width="1.2"><path d="M1 1 H16 M1 13 H16" stroke-width="1.4"/><rect x="1" y="5" width="4" height="4" rx="0.8"/><rect x="6.5" y="5" width="4" height="4" rx="0.8"/><rect x="12" y="5" width="4" height="4" rx="0.8"/></g></svg>
<div class="t" style="left:112px;top:716px;font-size:12.3px;color:#a3a9af">Row</div>
<svg style="left:282px;top:745px" width="17" height="17" viewBox="0 0 17 17"><g fill="none" stroke="#9aa0a6" stroke-width="1.3" stroke-linecap="round"><path d="M9 1.5 H3.8 A2.3 2.3 0 0 0 1.5 3.8 V13.2 A2.3 2.3 0 0 0 3.8 15.5 H13.2 A2.3 2.3 0 0 0 15.5 13.2 V8.5"/><path d="M13 0.8 V6 M10.4 3.4 H15.6"/><circle cx="5.5" cy="6.5" r="1.4"/><circle cx="5.5" cy="11" r="1.4"/></g></svg><svg style="left:314px;top:751px" width="7" height="4" viewBox="0 0 7 4"><path d="M0 0 H7 L3.5 4 Z" fill="#9aa0a6"/></svg><svg style="left:96px;top:745px" width="17" height="17" viewBox="0 0 17 17"><rect x="0.8" y="0.8" width="15.4" height="15.4" rx="1.5" fill="none" stroke="#9aa0a6" stroke-width="1.3"/></svg>
<div class="t" style="left:122px;top:748px;font-size:12.3px;color:#a3a9af">Container</div>
<svg style="left:282px;top:713px" width="17" height="17" viewBox="0 0 17 17"><g fill="none" stroke="#9aa0a6" stroke-width="1.3" stroke-linecap="round"><path d="M9 1.5 H3.8 A2.3 2.3 0 0 0 1.5 3.8 V13.2 A2.3 2.3 0 0 0 3.8 15.5 H13.2 A2.3 2.3 0 0 0 15.5 13.2 V8.5"/><path d="M13 0.8 V6 M10.4 3.4 H15.6"/><circle cx="5.5" cy="6.5" r="1.4"/><circle cx="5.5" cy="11" r="1.4"/></g></svg><svg style="left:314px;top:719px" width="7" height="4" viewBox="0 0 7 4"><path d="M0 0 H7 L3.5 4 Z" fill="#9aa0a6"/></svg><svg style="left:106px;top:778px" width="17" height="14" viewBox="0 0 17 14"><g fill="none" stroke="#9aa0a6" stroke-width="1.2"><path d="M1 1 H16 M1 13 H16" stroke-width="1.4"/><rect x="1" y="5" width="4" height="4" rx="0.8"/><rect x="6.5" y="5" width="4" height="4" rx="0.8"/><rect x="12" y="5" width="4" height="4" rx="0.8"/></g></svg>
<div class="t" style="left:131px;top:780px;font-size:12.3px;color:#a3a9af">Row</div>
<svg style="left:282px;top:777px" width="17" height="17" viewBox="0 0 17 17"><g fill="none" stroke="#9aa0a6" stroke-width="1.3" stroke-linecap="round"><path d="M9 1.5 H3.8 A2.3 2.3 0 0 0 1.5 3.8 V13.2 A2.3 2.3 0 0 0 3.8 15.5 H13.2 A2.3 2.3 0 0 0 15.5 13.2 V8.5"/><path d="M13 0.8 V6 M10.4 3.4 H15.6"/><circle cx="5.5" cy="6.5" r="1.4"/><circle cx="5.5" cy="11" r="1.4"/></g></svg><svg style="left:314px;top:783px" width="7" height="4" viewBox="0 0 7 4"><path d="M0 0 H7 L3.5 4 Z" fill="#9aa0a6"/></svg><svg style="left:116px;top:809px" width="17" height="17" viewBox="0 0 17 17"><rect x="0.8" y="0.8" width="15.4" height="15.4" rx="1.5" fill="none" stroke="#9aa0a6" stroke-width="1.3"/></svg>
<div class="t" style="left:141px;top:812px;font-size:12.3px;color:#a3a9af">Container</div>
<svg style="left:282px;top:809px" width="17" height="17" viewBox="0 0 17 17"><g fill="none" stroke="#9aa0a6" stroke-width="1.3" stroke-linecap="round"><path d="M9 1.5 H3.8 A2.3 2.3 0 0 0 1.5 3.8 V13.2 A2.3 2.3 0 0 0 3.8 15.5 H13.2 A2.3 2.3 0 0 0 15.5 13.2 V8.5"/><path d="M13 0.8 V6 M10.4 3.4 H15.6"/><circle cx="5.5" cy="6.5" r="1.4"/><circle cx="5.5" cy="11" r="1.4"/></g></svg><svg style="left:314px;top:815px" width="7" height="4" viewBox="0 0 7 4"><path d="M0 0 H7 L3.5 4 Z" fill="#9aa0a6"/></svg><svg style="left:128px;top:841px" width="12" height="18" viewBox="0 0 12 18"><g fill="none" stroke="#9aa0a6" stroke-width="1.2"><path d="M1 1 V17 M11 1 V17" stroke-width="1.5"/><rect x="4" y="1.5" width="4" height="4" rx="0.8"/><rect x="4" y="7" width="4" height="4" rx="0.8"/><rect x="4" y="12.5" width="4" height="4" rx="0.8"/></g></svg>
<div class="t" style="left:150px;top:844px;font-size:12.3px;color:#a3a9af">Column</div>
<svg style="left:282px;top:841px" width="17" height="17" viewBox="0 0 17 17"><g fill="none" stroke="#9aa0a6" stroke-width="1.3" stroke-linecap="round"><path d="M9 1.5 H3.8 A2.3 2.3 0 0 0 1.5 3.8 V13.2 A2.3 2.3 0 0 0 3.8 15.5 H13.2 A2.3 2.3 0 0 0 15.5 13.2 V8.5"/><path d="M13 0.8 V6 M10.4 3.4 H15.6"/><circle cx="5.5" cy="6.5" r="1.4"/><circle cx="5.5" cy="11" r="1.4"/></g></svg><svg style="left:314px;top:847px" width="7" height="4" viewBox="0 0 7 4"><path d="M0 0 H7 L3.5 4 Z" fill="#9aa0a6"/></svg><svg style="left:136px;top:875px" width="17" height="14" viewBox="0 0 17 14"><g fill="none" stroke="#9aa0a6" stroke-width="1.2"><path d="M1 1 H16 M1 13 H16" stroke-width="1.4"/><rect x="1" y="5" width="4" height="4" rx="0.8"/><rect x="6.5" y="5" width="4" height="4" rx="0.8"/><rect x="12" y="5" width="4" height="4" rx="0.8"/></g></svg>
<div class="t" style="left:160px;top:876px;font-size:12.3px;color:#a3a9af">Row</div>
<svg style="left:282px;top:873px" width="17" height="17" viewBox="0 0 17 17"><g fill="none" stroke="#9aa0a6" stroke-width="1.3" stroke-linecap="round"><path d="M9 1.5 H3.8 A2.3 2.3 0 0 0 1.5 3.8 V13.2 A2.3 2.3 0 0 0 3.8 15.5 H13.2 A2.3 2.3 0 0 0 15.5 13.2 V8.5"/><path d="M13 0.8 V6 M10.4 3.4 H15.6"/><circle cx="5.5" cy="6.5" r="1.4"/><circle cx="5.5" cy="11" r="1.4"/></g></svg><svg style="left:314px;top:879px" width="7" height="4" viewBox="0 0 7 4"><path d="M0 0 H7 L3.5 4 Z" fill="#9aa0a6"/></svg>
<svg style="left:145px;top:906px" width="15" height="15" viewBox="0 0 22 22"><g fill="none" stroke="#9aa0a6" stroke-width="1.8" stroke-linejoin="round"><path d="M9 1.5 H13 L13.6 4.2 L15.8 5.4 L18.4 4.5 L20.4 8 L18.3 9.8 V12.2 L20.4 14 L18.4 17.5 L15.8 16.6 L13.6 17.8 L13 20.5 H9 L8.4 17.8 L6.2 16.6 L3.6 17.5 L1.6 14 L3.7 12.2 V9.8 L1.6 8 L3.6 4.5 L6.2 5.4 L8.4 4.2 Z"/><circle cx="11" cy="11" r="3.2"/></g></svg>
<div class="t" style="left:169px;top:908px;font-size:12.3px;color:#a3a9af">Icon</div>


<!-- ============ CANVAS TOOLBAR ============ -->
<div class="a" style="left:356px;top:64px;width:30px;height:32px;background:#15181b;border-radius:7px;box-shadow:0 1px 3px rgba(0,0,0,.25)"></div>
<svg style="left:362px;top:71px" width="17" height="17" viewBox="0 0 17 17"><path d="M3 2 V15" stroke="#9aa0a6" stroke-width="3" stroke-linecap="round"/><path d="M13.5 5.5 L9.5 8.7 L13.5 11.8" fill="none" stroke="#b8bdc2" stroke-width="1.8" stroke-linecap="round" stroke-linejoin="round"/></svg>
<div class="a" style="left:398px;top:64px;width:100px;height:32px;background:#15181b;border-radius:7px;box-shadow:0 1px 3px rgba(0,0,0,.25)"></div>
<div class="a" style="left:404px;top:80px;width:12px;height:2px;background:#b8bdc2;border-radius:1px"></div>
<div class="t" style="left:432.5px;top:74px;font-size:15.3px;font-weight:bold;color:#fff">75%</div>
<svg style="left:480px;top:75px" width="12" height="12" viewBox="0 0 12 12"><path d="M6 0.5 V11.5 M0.5 6 H11.5" stroke="#b8bdc2" stroke-width="1.8" stroke-linecap="round"/></svg>
<div class="a" style="left:508px;top:63px;width:36px;height:36px;background:#5440f2;border-radius:8px"></div>
<svg style="left:516px;top:71px" width="20" height="20" viewBox="0 0 17 17"><g fill="none" stroke="#fff" stroke-width="1.3" stroke-linecap="round"><path d="M9 1.5 H3.8 A2.3 2.3 0 0 0 1.5 3.8 V13.2 A2.3 2.3 0 0 0 3.8 15.5 H13.2 A2.3 2.3 0 0 0 15.5 13.2 V8.5"/><path d="M13 0.8 V6 M10.4 3.4 H15.6"/><circle cx="5.5" cy="6.5" r="1.4"/><circle cx="5.5" cy="11" r="1.4"/></g></svg>
<div class="a" style="left:552px;top:63px;width:36px;height:36px;border-radius:8px;background:linear-gradient(45deg,#e8896a,#5b4ff5)"></div>
<div class="a" style="left:554px;top:65px;width:32px;height:32px;border-radius:6.5px;background:#15181b"></div>
<svg style="left:560px;top:71px" width="20" height="20" viewBox="0 0 20 20"><g fill="none" stroke="#fff" stroke-width="1.5" stroke-linejoin="round" stroke-linecap="round"><path d="M5 2.3 H18.8 L15.8 7 H2.8 Z"/><path d="M6 7 L3.8 11"/><path d="M4.5 10.8 C2.2 12.8 2.6 17.2 4.5 17.2 C6.4 17.2 6.8 12.8 4.5 10.8 Z"/></g><path d="M9.5 18.5 L16 12" stroke="#fff" stroke-width="2.6" stroke-linecap="round"/><path d="M10.5 17.5 L15 13" stroke="#15181b" stroke-width="0.6" stroke-dasharray="1 1"/><circle cx="17.3" cy="10.2" r="1.2" fill="#fff"/><circle cx="16.6" cy="15.2" r="1.2" fill="#fff"/></svg>

<div class="a" style="left:1421px;top:64px;width:146px;height:33px;background:#15181b;border-radius:8px;box-shadow:0 1px 3px rgba(0,0,0,.25)"></div>
<svg style="left:1426px;top:71px" width="20" height="20" viewBox="0 0 20 20"><circle cx="10" cy="10" r="4" fill="#a5abb2"/><g stroke="#a5abb2" stroke-width="1.6" stroke-linecap="round"><path d="M10 1.5 V3.5 M10 16.5 V18.5 M1.5 10 H3.5 M16.5 10 H18.5 M4 4 L5.4 5.4 M14.6 14.6 L16 16 M4 16 L5.4 14.6 M14.6 5.4 L16 4"/></g></svg>
<svg style="left:1467px;top:72px" width="13" height="21" viewBox="0 0 13 21"><rect x="1" y="1" width="11" height="19" rx="2.2" fill="none" stroke="#a5abb2" stroke-width="1.5"/></svg>
<svg style="left:1504px;top:72px" width="16" height="21" viewBox="0 0 16 21"><g fill="none" stroke="#a5abb2" stroke-width="1.5"><path d="M4.5 20 H2.8 A1.8 1.8 0 0 1 1 18.2 V2.8 A1.8 1.8 0 0 1 2.8 1 H13.2 A1.8 1.8 0 0 1 15 2.8 V10"/><rect x="5.5" y="11" width="9.5" height="9" rx="1.5"/><rect x="8.5" y="13.5" width="4" height="5" rx="0.5"/></g></svg>
<svg style="left:1537px;top:74px" width="21" height="14" viewBox="0 0 21 14"><rect x="0.5" y="0.5" width="20" height="13" rx="2" fill="#a5abb2"/><g fill="#15181b"><rect x="3" y="3" width="2" height="2"/><rect x="6.5" y="3" width="2" height="2"/><rect x="10" y="3" width="2" height="2"/><rect x="13.5" y="3" width="2" height="2"/><rect x="17" y="3" width="1.5" height="2"/><rect x="3" y="6" width="2" height="2"/><rect x="6.5" y="6" width="2" height="2"/><rect x="10" y="6" width="2" height="2"/><rect x="13.5" y="6" width="2" height="2"/><rect x="17" y="6" width="1.5" height="2"/><rect x="6" y="9.5" width="9" height="1.6"/></g></svg>
<div class="a" style="left:1579px;top:64px;width:33px;height:33px;background:#15181b;border-radius:8px;box-shadow:0 1px 3px rgba(0,0,0,.25)"></div>
<svg style="left:1584px;top:72px" width="20" height="19" viewBox="0 0 20 19"><g fill="none" stroke="#a5abb2" stroke-width="1.4"><rect x="1" y="1" width="3.5" height="3.5" rx="1"/><rect x="14.5" y="1" width="3.5" height="3.5" rx="1"/><rect x="1" y="14" width="3.5" height="3.5" rx="1"/><path d="M4.5 2.8 H14.5 M2.8 4.5 V14 M4.5 15.8 H10 M16.2 4.5 V8"/></g><circle cx="15.5" cy="14" r="3.6" fill="#a5abb2"/><circle cx="15.5" cy="14" r="1.3" fill="#15181b"/></svg>


<!-- ============ CANVAS FRAME ============ -->
<div class="a" style="left:442px;top:167.5px;width:1080px;height:675px;background:#fff;border-radius:5px"></div>
<div class="a" style="left:496px;top:167.5px;width:205px;height:227px;border:1px solid #a8a8a8;border-radius:10px"></div>
<div class="a" style="left:717px;top:167.5px;width:530px;height:591px;border:1px solid #a8a8a8;border-radius:10px"></div>
<div class="a" style="left:1263px;top:167.5px;width:205px;height:342px;border:1px solid #a8a8a8;border-radius:10px"></div>
<svg style="left:512px;top:185px" width="16" height="16" viewBox="0 0 16 16"><circle cx="8" cy="8" r="6.9" fill="none" stroke="#1f6bd6" stroke-width="1.5"/><path d="M8 7 V11.6" stroke="#1f6bd6" stroke-width="1.7"/><circle cx="8" cy="4.6" r="1" fill="#1f6bd6"/></svg>
<div class="t" style="left:537.8px;top:186.91px;font-size:12.1px;font-weight:bold;color:#1f66cc;">Overview</div>
<svg style="left:514px;top:219px" width="14" height="14" viewBox="0 0 14 14"><g fill="none" stroke="#616161" stroke-width="1.5"><circle cx="7" cy="4" r="2.6"/><path d="M1.2 13 V11.6 C1.2 9.8 4 8.6 7 8.6 C10 8.6 12.8 9.8 12.8 11.6 V13 Z"/></g></svg>
<div class="t" style="left:537.8px;top:219.49px;font-size:12.6px;font-weight:bold;color:#8a8a8a;">Members</div>
<svg style="left:512px;top:250px" width="17" height="17" viewBox="0 0 17 17"><path d="M1.5 15.5 V2.8 A1.3 1.3 0 0 1 2.8 1.5 H14.2 A1.3 1.3 0 0 1 15.5 2.8 V11 A1.3 1.3 0 0 1 14.2 12.3 H4.7 Z" fill="none" stroke="#616161" stroke-width="1.6" stroke-linejoin="round"/></svg>
<div class="t" style="left:537.8px;top:252.49px;font-size:12.6px;font-weight:bold;color:#8a8a8a;">Messages</div>
<svg style="left:511px;top:282px" width="22" height="20" viewBox="0 0 22 20"><g fill="none" stroke="#616161" stroke-width="1.8" stroke-linecap="round"><circle cx="11" cy="3.3" r="2"/><path d="M11 5.3 V18.5"/><path d="M2.5 11.5 C2.5 15.8 6.5 18.5 11 18.5 C15.5 18.5 19.5 15.8 19.5 11.5"/><path d="M7.5 9.5 H14.5"/></g><path d="M0.5 12.5 L2.5 9.5 L4.5 12.5 Z M17.5 12.5 L19.5 9.5 L21.5 12.5 Z" fill="#616161"/></svg>
<div class="t" style="left:539.6px;top:285.49px;font-size:12.6px;font-weight:bold;color:#8a8a8a;">Milestones</div>
<svg style="left:513px;top:317px" width="16" height="16" viewBox="0 0 16 16"><g fill="none" stroke="#616161" stroke-width="1.6"><path d="M14.5 4 V2.5 H2.5 A1 1 0 0 0 1.5 3.5 V13.5 A1 1 0 0 0 2.5 14.5 H14.5 V4 H5"/><rect x="8" y="6.5" width="6.5" height="5" /></g><circle cx="10.8" cy="9" r="1.1" fill="#616161"/></svg>
<div class="t" style="left:537.8px;top:318.49px;font-size:12.6px;font-weight:bold;color:#8a8a8a;">Payments</div>
<div class="t" style="left:737.3px;top:190.42px;font-size:14.1px;font-weight:bold;color:#111;">[$.data.project_title]</div>
<div class="t" style="left:1013.5px;top:189.83px;font-size:11.97px;color:#616161;">Client:<span style="color:#111">[$.data.client_squad_name]</span></div>
<div class="a" style="left:1216.5px;top:189.5px;width:3px;height:3px;border-radius:50%;background:#616161"></div>
<div class="a" style="left:1216.5px;top:194.5px;width:3px;height:3px;border-radius:50%;background:#616161"></div>
<div class="a" style="left:1216.5px;top:199.5px;width:3px;height:3px;border-radius:50%;background:#616161"></div>
<div class="t" style="left:737.3px;top:217.85px;font-size:11.94px;color:#6e6e6e;">Project ID:<span style="color:#111">[$.data.project_id]</span></div>
<div class="a" style="left:897.5px;top:219px;width:9.5px;height:9.5px;border-radius:50%;background:#e0e0e0"></div>
<div class="t" style="left:914.5px;top:217.99px;font-size:11.78px;color:#6e6e6e;">Status: <span style="color:#111">Ongoing</span></div>
<svg style="left:737px;top:242px" width="31" height="16" viewBox="0 0 31 16"><rect width="31" height="16" fill="#fff"/><g fill="#c8102e"><rect y="0" width="31" height="1.25"/><rect y="2.5" width="31" height="1.25"/><rect y="5" width="31" height="1.25"/><rect y="7.4" width="31" height="1.25"/><rect y="9.9" width="31" height="1.25"/><rect y="12.3" width="31" height="1.25"/><rect y="14.8" width="31" height="1.25"/></g><rect width="12.5" height="8.6" fill="#2a3d8f"/></svg>
<div class="t" style="left:773px;top:245.18px;font-size:11.2px;color:#9e9e9e;">[$.data.state]</div>
<div class="a" style="left:843.5px;top:246px;width:9px;height:9px;border-radius:50%;background:#e6e6e6"></div>
<div class="t" style="left:857px;top:245.73px;font-size:10.55px;color:#9e9e9e;">[$.data.work_duration_min] - [$.data.work_duration_max] months</div>
<div class="a" style="left:1167px;top:246px;width:9.5px;height:9.5px;border-radius:50%;background:#e6e6e6"></div>
<div class="t" style="left:737px;top:259.28px;font-size:11.2px;color:#9e9e9e;">Fixed fee</div>
<div class="a" style="left:789px;top:260.5px;width:9px;height:9px;border-radius:50%;background:#e6e6e6"></div>
<div class="t" style="left:803.4px;top:259.93px;font-size:10.44px;color:#9e9e9e;"><span style="color:#444">$</span>[$.data.fixedHR_amount_max]</div>
<div class="a" style="left:955.5px;top:260.5px;width:9px;height:9px;border-radius:50%;background:#e6e6e6"></div>
<div class="t" style="left:969.8px;top:258.86px;font-size:11.7px;color:#9e9e9e;">[$.data.project_mode]</div>
<div class="t" style="left:737.6px;top:291.38px;font-size:10.5px;color:#333;-webkit-text-stroke:0.35px #333">Skills:</div>
<div class="a" style="left:772.3px;top:283px;width:63.3px;height:26.3px;border:1px solid #4a84de;border-radius:14px"></div>
<div class="t" style="left:772.3px;top:290.97px;width:63.3px;text-align:center;font-size:11.8px;color:#1f66cc">HTML</div>
<div class="a" style="left:840px;top:283px;width:63.2px;height:26.3px;border:1px solid #4a84de;border-radius:14px"></div>
<div class="t" style="left:840px;top:290.97px;width:63.2px;text-align:center;font-size:11.8px;color:#1f66cc">Css</div>
<div class="a" style="left:907.2px;top:283px;width:134.6px;height:26.3px;border:1px solid #4a84de;border-radius:14px"></div>
<div class="t" style="left:907.2px;top:290.97px;width:134.6px;text-align:center;font-size:11.8px;color:#1f66cc">Front end development</div>
<div class="a" style="left:1046px;top:283px;width:138.6px;height:26.3px;border:1px solid #4a84de;border-radius:14px"></div>
<div class="t" style="left:1046px;top:290.97px;width:138.6px;text-align:center;font-size:11.8px;color:#1f66cc">Back end development</div>
<div class="a" style="left:737px;top:313.4px;width:55.7px;height:26.3px;border:1px solid #4a84de;border-radius:14px"></div>
<div class="t" style="left:737px;top:321.37px;width:55.7px;text-align:center;font-size:11.8px;color:#1f66cc">Nodejs</div>
<div class="a" style="left:736.5px;top:355.5px;width:490.5px;height:1.3px;background:#c4c4c4"></div>
<svg style="left:737px;top:374.5px" width="14" height="14" viewBox="0 0 14 14"><circle cx="7" cy="7" r="6" fill="none" stroke="#1f6bd6" stroke-width="1.4"/><path d="M7 6 V10.3" stroke="#1f6bd6" stroke-width="1.5"/><circle cx="7" cy="3.9" r="0.9" fill="#1f6bd6"/></svg>
<div class="t" style="left:753.8px;top:376.43px;font-size:11.5px;font-weight:bold;color:#111;">Description</div>
<div class="t" style="left:737.6px;top:401.80px;font-size:12px;color:#7a7a7a;">[$.data.description]</div>
<svg style="left:1279px;top:184px" width="14" height="14" viewBox="0 0 14 14"><g fill="none" stroke="#1f6bd6" stroke-width="1.5" stroke-linecap="round"><path d="M9.5 2.2 A5.5 5.5 0 1 0 12.5 7"/><path d="M6.5 4.5 V7.5 L8.5 9"/><path d="M11.5 0.8 V4.8 M9.5 2.8 H13.5"/></g></svg>
<div class="t" style="left:1295.3px;top:185.71px;font-size:11.4px;font-weight:bold;color:#111;">Project timeline</div>
<div class="a" style="left:1278px;top:203.5px;width:174px;height:1px;background:#777"></div>

<!-- ============ TOAST ============ -->
<div class="a" style="left:487.5px;top:827.8px;width:944.5px;height:94.2px;border:2px solid #f5921e;border-radius:8px;background:rgba(226,128,10,0.82)"></div>
<div class="t" style="left:508.6px;top:842.05px;font-size:15px;font-weight:bold;color:#fff8ee;">That would cause a breaking crash!</div>
<div class="t" style="left:508.6px;top:864.08px;font-size:13.55px;color:#fff6e8;">The layout option you selected would have caused a Flutter layout conflict and crashed your app, so we&#39;ve reverted it for you.</div>
<svg style="left:1409px;top:843px" width="13" height="13" viewBox="0 0 13 13"><path d="M1.5 1.5 L11.5 11.5 M11.5 1.5 L1.5 11.5" stroke="#fff" stroke-width="1.8" stroke-linecap="round"/></svg>
<div class="a" style="left:1296px;top:876px;width:120px;height:30px;background:#f7900c;border-radius:8px;box-shadow:0 1px 2px rgba(0,0,0,.15)"></div>
<div class="t" style="left:1317.5px;top:884.87px;font-size:13.1px;font-weight:bold;color:#fff;">Layout docs</div>

<!-- ============ RIGHT PANEL ============ -->
<div class="a" style="left:1615px;top:52px;width:5px;height:874px;background:#1f2327"></div>
<svg style="left:1634px;top:62.5px" width="12" height="14" viewBox="0 0 12 14"><g fill="none" stroke="#fff" stroke-width="1.1"><path d="M1 0.5 V13.5 M11 0.5 V13.5" stroke-width="1.5"/><rect x="4" y="1" width="4" height="3.2" rx="0.6"/><rect x="4" y="5.4" width="4" height="3.2" rx="0.6"/><rect x="4" y="9.8" width="4" height="3.2" rx="0.6"/></g></svg>
<div class="t" style="left:1653px;top:62.16px;font-size:12.4px;font-weight:bold;color:#fff;">Column</div>
<div class="t" style="left:1632.5px;top:84.42px;font-size:15.5px;color:#8f959b;">Column</div>
<svg style="left:1699px;top:87px" width="17" height="15" viewBox="0 0 17 15"><g fill="none" stroke="#8f959b" stroke-width="1.3" stroke-linejoin="round" stroke-linecap="round"><path d="M2 13 L2.5 9.8 L10.5 1.8 A1.5 1.5 0 0 1 12.7 1.8 L13.2 2.3 A1.5 1.5 0 0 1 13.2 4.5 L5.2 12.5 Z"/><path d="M9.5 2.8 L12.2 5.5"/><path d="M11 13.5 H15"/></g></svg>
<div class="a" style="left:1838.5px;top:66.5px;width:31.5px;height:31.5px;background:#1d2226;border:1px solid #2a3036;border-radius:8px"></div>
<svg style="left:1845px;top:74px" width="18" height="17" viewBox="0 0 16 16"><g fill="none" stroke="#fff" stroke-width="1.4" stroke-linejoin="round"><path d="M3.8 1.2 H12.2 L15.2 5.6 L8 15.3 L0.8 5.6 Z"/><path d="M0.8 5.6 H15.2 M5.8 1.2 L4.9 5.6 L8 15.3 L11.1 5.6 L10.2 1.2"/></g></svg>
<div class="a" style="left:1876px;top:66.5px;width:40px;height:31.5px;background:#1d2226;border:1px solid #2a3036;border-radius:8px"></div>
<svg style="left:1883px;top:74px" width="17" height="17" viewBox="0 0 17 17"><g fill="none" stroke="#fff" stroke-width="1.4" stroke-linecap="round"><path d="M9 1.5 H3.8 A2.3 2.3 0 0 0 1.5 3.8 V13.2 A2.3 2.3 0 0 0 3.8 15.5 H13.2 A2.3 2.3 0 0 0 15.5 13.2 V8.5"/><path d="M13 0.8 V6 M10.4 3.4 H15.6"/><circle cx="5.5" cy="6.5" r="1.4"/><circle cx="5.5" cy="11" r="1.4"/></g></svg>

<div class="a" style="left:1632.5px;top:114px;width:290px;height:35px;background:#1d2226;border-radius:9px"></div>
<div class="a" style="left:1772.5px;top:116.3px;width:40.8px;height:29.7px;background:#0e1012;border-radius:7px"></div>
<svg style="left:1645px;top:122px" width="20" height="20" viewBox="0 0 20 20"><g fill="none" stroke="#9aa0a6" stroke-width="1.4" stroke-linejoin="round" stroke-linecap="round"><path d="M2 6 L6 2 L18 14 L14 18 Z"/><path d="M5 6 L6.5 4.5 M7.5 8.5 L9 7 M10 11 L11.5 9.5 M12.5 13.5 L14 12"/><path d="M13 2 L17.5 6.5 L7 17 L3 18 L4 14 Z" /></g></svg>
<svg style="left:1691px;top:122px" width="20" height="20" viewBox="0 0 20 20"><g fill="none" stroke="#9aa0a6" stroke-width="1.4" stroke-linejoin="round" stroke-linecap="round"><circle cx="3" cy="3" r="1.8" fill="#9aa0a6"/><circle cx="13" cy="17" r="1.8" fill="#9aa0a6"/><path d="M3 5 C3 11 7 15 11 16.5"/><path d="M11 2 L18 9 L14.8 9.8 L16.8 13.2 L15.3 14 L13.3 10.7 L11 13 Z"/></g></svg>
<svg style="left:1737px;top:122px" width="20" height="20" viewBox="0 0 20 22"><g fill="none" stroke="#9aa0a6" stroke-width="1.4" stroke-linejoin="round"><rect x="1" y="1" width="18" height="20" rx="1.5"/><path d="M1 7.7 H19 M1 14.3 H19"/></g><g fill="#9aa0a6"><circle cx="13" cy="4.4" r="0.9"/><circle cx="15.8" cy="4.4" r="0.9"/><circle cx="13" cy="11" r="0.9"/><circle cx="15.8" cy="11" r="0.9"/><circle cx="13" cy="17.6" r="0.9"/><circle cx="15.8" cy="17.6" r="0.9"/></g></svg>
<svg style="left:1786px;top:121.5px" width="14" height="20" viewBox="0 0 14 20"><g fill="none" stroke="#fff" stroke-width="1.4"><path d="M1 1 V19 M13 1 V19" stroke-width="1.8"/><rect x="4.6" y="1.7" width="4.8" height="4.3" rx="0.8"/><rect x="4.6" y="7.9" width="4.8" height="4.3" rx="0.8"/><rect x="4.6" y="14" width="4.8" height="4.3" rx="0.8"/></g></svg>
<svg style="left:1834px;top:125px" width="12" height="14" viewBox="0 0 12 14"><path d="M1 1 L11 7 L1 13 Z" fill="#9aa0a6"/></svg>
<svg style="left:1875px;top:122px" width="19" height="20" viewBox="0 0 19 20"><g fill="none" stroke="#9aa0a6" stroke-width="1.4" stroke-linecap="round"><path d="M10 3 H3.5 A2 2 0 0 0 1.5 5 V17 A2 2 0 0 0 3.5 19 H14 A2 2 0 0 0 16 17 V10"/><path d="M15 1 V7 M12 4 H18"/><path d="M5 10.5 H8 M5 13.5 H12"/></g></svg>
<div class="t" style="left:1632.2px;top:166.72px;font-size:13.5px;font-weight:bold;color:#ed8a64;">Generating Children from Variable</div>
<div class="t" style="left:1632px;top:193.38px;font-size:12.85px;color:#a3a9af;">Variable Name</div>
<svg style="left:1722px;top:193px" width="12" height="12" viewBox="0 0 12 12"><circle cx="6" cy="6" r="5" fill="none" stroke="#8f959b" stroke-width="1.1"/><path d="M6 5.2 V8.8" stroke="#8f959b" stroke-width="1.2"/><circle cx="6" cy="3.4" r="0.7" fill="#8f959b"/></svg>
<div class="a" style="left:1632px;top:211.5px;width:290px;height:32.5px;background:#15181b;border:1px solid #2c3137;border-radius:8px"></div>
<div class="t" style="left:1632px;top:257.08px;font-size:12.85px;color:#a3a9af;">Max Items</div>
<div class="a" style="left:1632px;top:275.5px;width:290px;height:32px;background:#15181b;border:1px solid #2c3137;border-radius:8px"></div>
<div class="t" style="left:1650px;top:285.11px;font-size:13.4px;font-weight:bold;color:#8f959b;font-style:italic">Leave empty for no limit...</div>
<div class="t" style="left:1632px;top:321.08px;font-size:12.85px;color:#a3a9af;">Value</div>
<div class="a" style="left:1632px;top:339.5px;width:290px;height:32px;background:#1d2226;border:1px solid #2a3036;border-radius:8px"></div>
<svg style="left:1643px;top:348px" width="16" height="16" viewBox="0 0 16 16"><g fill="none" stroke="#9aa0a6" stroke-width="1.3"><rect x="0.8" y="0.8" width="14.4" height="14.4" rx="2"/><rect x="3.5" y="3.8" width="3" height="3" rx="0.5"/><rect x="3.5" y="9.2" width="3" height="3" rx="0.5"/><path d="M8.5 5.3 H12.5 M8.5 10.7 H12.5"/></g></svg>
<div class="t" style="left:1669px;top:350.27px;font-size:11.8px;font-weight:bold;color:#ed8a64;">UNSET</div>
<svg style="left:1880px;top:348px" width="19" height="17" viewBox="0 0 17 15"><g fill="none" stroke="#9aa0a6" stroke-width="1.2" stroke-linejoin="round" stroke-linecap="round"><path d="M2 13 L2.5 9.8 L10.5 1.8 A1.5 1.5 0 0 1 12.7 1.8 L13.2 2.3 A1.5 1.5 0 0 1 13.2 4.5 L5.2 12.5 Z"/><path d="M9.5 2.8 L12.2 5.5"/><path d="M11 13.5 H15.5"/></g></svg>
<div class="a" style="left:1632px;top:401.3px;width:72.7px;height:40px;background:#2b3138;border-radius:7px"></div>
<div class="a" style="left:1761px;top:401.3px;width:65.8px;height:40px;background:#2b3138;border-radius:7px"></div>
<div class="a" style="left:1835px;top:401.3px;width:80px;height:40px;background:#ee8a62;border-radius:7px"></div>
<div class="t" style="left:1636px;top:415.25px;font-size:13px;font-weight:bold;color:#e2555a;width:66px;text-align:center">Remove</div>
<div class="t" style="left:1761px;top:415.25px;font-size:13px;font-weight:bold;color:#fff;width:65.8px;text-align:center">Cancel</div>
<div class="t" style="left:1846.5px;top:415.25px;font-size:13px;font-weight:bold;color:#fff;">Confirm</div>
<div class="a" style="left:1852px;top:888px;width:48px;height:48px;border-radius:50%;background:#5039f3"></div>
<svg style="left:1865px;top:900px" width="22" height="24" viewBox="0 0 22 24"><path d="M2.5 0.3 H19.5 A1.8 1.8 0 0 1 21.3 2.1 V23.5 L16.5 20.8 H2.5 A1.8 1.8 0 0 1 0.7 19 V2.1 A1.8 1.8 0 0 1 2.5 0.3 Z" fill="#fff"/><path d="M3.5 15 C7.5 18.5 13.5 18.5 17.5 15" fill="none" stroke="#3b2fa8" stroke-width="1.5" stroke-linecap="round"/></svg>

</body></html>
